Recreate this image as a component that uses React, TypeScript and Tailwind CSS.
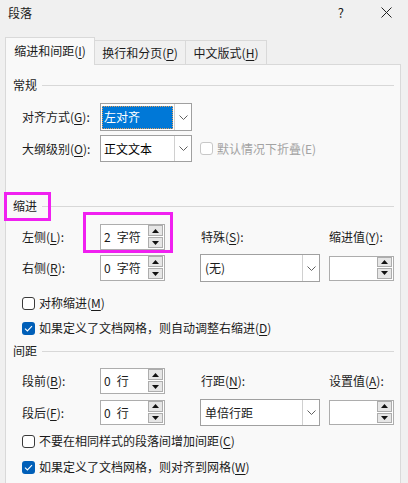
import React from "react";

const U = ({ c }: { c: string }) => <span className="underline underline-offset-[2px]">{c}</span>;

function Chevron() {
  return (
    <svg width="9" height="5" viewBox="0 0 9 5" className="block">
      <path d="M0.5 0.5 L4.5 4.5 L8.5 0.5" fill="none" stroke="#606060" strokeWidth="1" />
    </svg>
  );
}

function Tri({ up }: { up: boolean }) {
  return (
    <svg width="7" height="4" viewBox="0 0 7 4" className="block">
      {up ? <path d="M0 4 L3.5 0 L7 4 Z" fill="#111" /> : <path d="M0 0 L3.5 4 L7 0 Z" fill="#111" />}
    </svg>
  );
}

function Spinner({ num, unit, h = 26 }: { num?: string; unit?: string; h?: number }) {
  return (
    <div
      className={`flex w-[65px] border border-[#adadad] bg-white ${h === 26 ? "h-[26px]" : "h-[25px]"}`}
    >
      <div className="flex flex-1 items-center pl-[3px] leading-[16px]">
        {num && <span>{num}</span>}
        {unit && <span className="ml-[6px]">{unit}</span>}
      </div>
      <div className="flex w-[16px] flex-col gap-[1px] pb-[1px] pr-[1px]">
        <div className="flex flex-1 items-center justify-center border border-[#adadad] bg-[#e6e6e6]">
          <Tri up />
        </div>
        <div className="flex flex-1 items-center justify-center border border-[#adadad] bg-[#e6e6e6]">
          <Tri up={false} />
        </div>
      </div>
    </div>
  );
}

function Combo({
  children,
  w,
  h,
}: {
  children: React.ReactNode;
  w: string;
  h: string;
}) {
  return (
    <div className={`flex ${w} ${h} border border-[#a0a0a0] bg-white`}>
      <div className="flex flex-1 items-center pl-[1px]">{children}</div>
      <div className="flex w-[17px] items-center justify-center border-l border-[#d0d0d0] bg-white">
        <Chevron />
      </div>
    </div>
  );
}

function Header({ t }: { t: string }) {
  return (
    <div className="flex h-[18px] items-center pl-[7px] pr-[6px]">
      <span className="leading-[18px]">{t}</span>
      <div className="ml-[5px] h-px flex-1 bg-[#d8d8d8]" />
    </div>
  );
}

function Check({ checked, children, disabled }: { checked?: boolean; children: React.ReactNode; disabled?: boolean }) {
  return (
    <div className={`flex h-[16px] items-center ${disabled ? "text-[#a3a3a3]" : ""}`}>
      {checked ? (
        <div className="flex h-[13px] w-[13px] items-center justify-center rounded-[3px] bg-[#005fb8]">
          <svg width="9" height="7" viewBox="0 0 9 7">
            <path d="M1 3.6 L3.4 6 L8 1.2" fill="none" stroke="white" strokeWidth="1.1" />
          </svg>
        </div>
      ) : (
        <div
          className={`h-[13px] w-[13px] rounded-[3px] border bg-white ${
            disabled ? "border-[#c8c8c8] bg-[#f9f9f9]" : "border-[#3a3a3a]"
          }`}
        />
      )}
      <span className="ml-[4px] leading-[16px]">{children}</span>
    </div>
  );
}

export default function App() {
  return (
    <div className="relative h-[483px] w-[408px] overflow-hidden bg-[#f0f0f0] font-['Noto_Sans_CJK_SC','Noto_Sans',sans-serif] text-[12px] leading-[16px] text-[#1b1b1b]">
      {/* title bar */}
      <div className="flex h-[25px] items-center pl-[8px]">
        <span className="leading-[16px]">段落</span>
        <span className="ml-auto mr-[37px] text-[13px] leading-[16px]">?</span>
        <svg width="11" height="11" viewBox="0 0 11 11" className="mr-[16px]">
          <path d="M0.5 0.5 L10.5 10.5 M10.5 0.5 L0.5 10.5" stroke="#222" strokeWidth="1" />
        </svg>
      </div>

      {/* tabs */}
      <div className="relative z-10 mt-[12px] flex h-[27px] items-end pl-[5px]">
        <div className="flex h-[28px] w-[90px] translate-y-[1px] items-center justify-center border border-b-0 border-[#d9d9d9] bg-[#f9f9f9] pb-[1px]">
          缩进和间距(<U c="I" />)
        </div>
        <div className="flex h-[24px] w-[91px] items-center justify-center border border-b-0 border-l-0 border-[#d9d9d9] bg-[#f0f0f0]">
          换行和分页(<U c="P" />)
        </div>
        <div className="flex h-[24px] w-[81px] items-center justify-center border border-b-0 border-l-0 border-[#d9d9d9] bg-[#f0f0f0]">
          中文版式(<U c="H" />)
        </div>
      </div>

      {/* panel */}
      <div className="ml-[5px] h-[430px] w-[396px] border border-[#d9d9d9] bg-[#f9f9f9]">
        <div className="mt-[11px]">
          <Header t="常规" />
        </div>

        <div className="mt-[9px] flex h-[28px] items-center pl-[16px]">
          <div className="w-[78px]">
            对齐方式(<U c="G" />):
          </div>
          <Combo w="w-[92px]" h="h-[28px]">
            <div className="flex h-[23px] w-[71px] items-center bg-[#0078d7] pl-[2px] text-white outline outline-1 outline-dotted outline-[#e0a060] -outline-offset-1">
              左对齐
            </div>
          </Combo>
        </div>

        <div className="mt-[4px] flex h-[27px] items-center pl-[16px]">
          <div className="w-[78px]">
            大纲级别(<U c="O" />):
          </div>
          <Combo w="w-[92px]" h="h-[27px]">
            <span className="pl-[2px] text-black">正文文本</span>
          </Combo>
          <div className="ml-[8px]">
            <Check disabled>默认情况下折叠(E)</Check>
          </div>
        </div>

        <div className="mt-[35px]">
          <Header t="缩进" />
        </div>

        <div className="mt-[9px] flex h-[26px] items-center pl-[16px]">
          <div className="w-[78px]">
            左侧(<U c="L" />):
          </div>
          <Spinner num="2" unit="字符" />
          <div className="ml-[36px] w-[128px]">
            特殊(<U c="S" />):
          </div>
          <div>
            缩进值(<U c="Y" />):
          </div>
        </div>

        <div className="mt-[4px] flex h-[28px] items-center pl-[16px]">
          <div className="w-[78px]">
            右侧(<U c="R" />):
          </div>
          <Spinner num="0" unit="字符" />
          <div className="ml-[35px]">
            <Combo w="w-[120px]" h="h-[28px]">
              <span className="pl-[3px]">(无)</span>
            </Combo>
          </div>
          <div className="ml-[9px]">
            <Spinner h={25} />
          </div>
        </div>

        <div className="mt-[13px] pl-[16px]">
          <Check>
            对称缩进(<U c="M" />)
          </Check>
        </div>
        <div className="mt-[9px] pl-[16px]">
          <Check checked>
            如果定义了文档网格，则自动调整右缩进(<U c="D" />)
          </Check>
        </div>

        <div className="mt-[6px]">
          <Header t="间距" />
        </div>

        <div className="mt-[8px] flex h-[26px] items-center pl-[16px]">
          <div className="w-[78px]">
            段前(<U c="B" />):
          </div>
          <Spinner num="0" unit="行" />
          <div className="ml-[36px] w-[128px]">
            行距(<U c="N" />):
          </div>
          <div>
            设置值(<U c="A" />):
          </div>
        </div>

        <div className="mt-[5px] flex h-[27px] items-center pl-[16px]">
          <div className="w-[78px]">
            段后(<U c="F" />):
          </div>
          <Spinner num="0" unit="行" h={25} />
          <div className="ml-[35px]">
            <Combo w="w-[120px]" h="h-[27px]">
              <span className="pl-[3px]">单倍行距</span>
            </Combo>
          </div>
          <div className="ml-[9px]">
            <Spinner h={25} />
          </div>
        </div>

        <div className="mt-[7px] pl-[16px]">
          <Check>
            不要在相同样式的段落间增加间距(<U c="C" />)
          </Check>
        </div>
        <div className="mt-[10px] pl-[16px]">
          <Check checked>
            如果定义了文档网格，则对齐到网格(<U c="W" />)
          </Check>
        </div>
      </div>

      {/* annotation boxes */}
      <div className="pointer-events-none absolute left-[4px] top-[192px] h-[29px] w-[47px] border-[3px] border-[#f020f0]" />
      <div className="pointer-events-none absolute left-[83px] top-[212px] h-[41px] w-[90px] border-[3px] border-[#f020f0]" />
    </div>
  );
}
